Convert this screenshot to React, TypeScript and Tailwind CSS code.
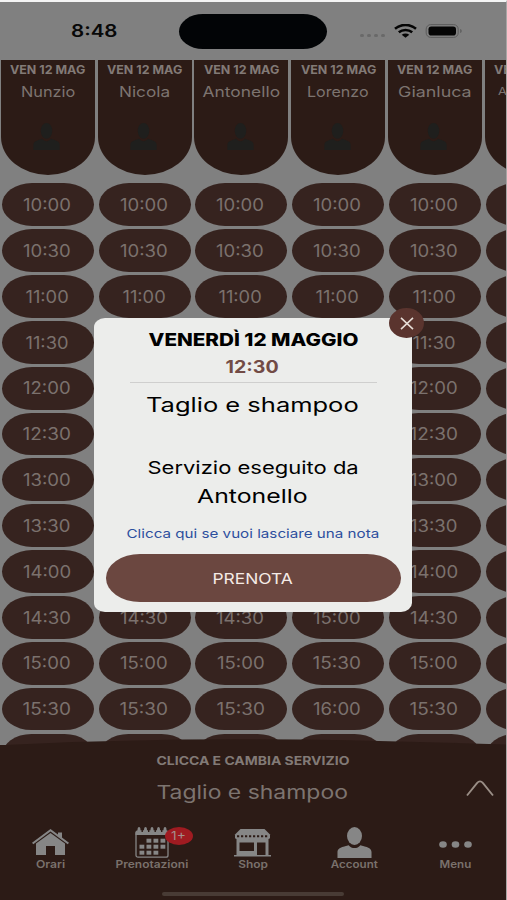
import { useLayoutEffect, useRef, useState, type ReactNode } from "react";

const TIMES = [
  "10:00", "10:30", "11:00", "11:30", "12:00", "12:30", "13:00",
  "13:30", "14:00", "14:30", "15:00", "15:30", "16:00",
];

// Lorenzo skips the 14:30 slot
const LORENZO_TIMES = [...TIMES.slice(0, 9), "15:00", "15:30", "16:00", "16:30"];

interface Barber {
  name: string;
  nameWidth: number;
  times: string[];
  small?: boolean;
}

const BARBERS: Barber[] = [
  { name: "Nunzio", nameWidth: 54, times: TIMES },
  { name: "Nicola", nameWidth: 51, times: TIMES },
  { name: "Antonello", nameWidth: 78, times: TIMES },
  { name: "Lorenzo", nameWidth: 62, times: LORENZO_TIMES },
  { name: "Gianluca", nameWidth: 74, times: TIMES },
  { name: "Alessandro", nameWidth: 68, times: TIMES, small: true },
];

/**
 * Single line of text stretched horizontally to a given width
 */
function WideText({
  width,
  className = "",
  children,
}: {
  width: number;
  className?: string;
  children: ReactNode;
}) {
  const ref = useRef<HTMLSpanElement>(null);
  const [scale, setScale] = useState(1);

  useLayoutEffect(() => {
    if (ref.current) setScale(width / ref.current.offsetWidth);
  }, [width]);

  return (
    <span
      ref={ref}
      className={`inline-block shrink-0 whitespace-nowrap ${className}`}
      style={{ transform: `scaleX(${scale})` }}
    >
      {children}
    </span>
  );
}

function StatusBar() {
  return (
    <div className="flex h-[58px] shrink-0 items-center bg-[#808080]">
      <div className="flex w-[179px] justify-center pt-[2px] pl-[10px]">
        <WideText width={47} className="text-[17px] font-semibold text-[#080808]">
          8:48
        </WideText>
      </div>
      <div className="h-[35px] w-[148px] rounded-[24px/17.5px] bg-[#020406]" />
      <div className="flex items-center pl-[33px]">
        <div className="flex gap-[3px] pt-2">
          {[0, 1, 2, 3].map((i) => (
            <div key={i} className="h-[3px] w-1 rounded-full bg-[#696969]" />
          ))}
        </div>
        <svg className="ml-[9px] h-[14px] w-[23px]" viewBox="0 0 23 14" preserveAspectRatio="none">
          <path
            d="M1 4.8C7 -.4 16 -.4 22 4.8M4.8 8.3c3.8-3.2 9.6-3.2 13.4 0"
            fill="none"
            stroke="#050505"
            strokeWidth="2.5"
          />
          <path d="M11.5 13.8L7.7 10.8c2.2-1.7 5.4-1.7 7.6 0z" fill="#050505" />
        </svg>
        <svg className="ml-[8px] h-[14px] w-[37px]" viewBox="0 0 37 14">
          <rect x="1.2" y=".6" width="32" height="12.8" rx="4.5" fill="none" stroke="#5c5c5c" />
          <rect x="3.5" y="2.5" width="27.5" height="9" rx="2.8" fill="#050505" />
          <path d="M35.2 5c2 .8 2 3.2 0 4z" fill="#5c5c5c" />
        </svg>
      </div>
    </div>
  );
}

function PersonIcon({ className }: { className: string }) {
  return (
    <svg className={className} viewBox="0 0 36 31" preserveAspectRatio="none" fill="currentColor">
      <ellipse cx="18" cy="9" rx="7.7" ry="9" />
      <path d="M.5 31v-6c0-3 3-4.3 6-5.2l5.500-1.600c3 3.800 9 3.800 12 0l5.500 1.600c3 .9 6 2.200 6 5.200v6z" />
    </svg>
  );
}

function BarberColumn({ barber }: { barber: Barber }) {
  return (
    <div className="flex w-[96.75px] shrink-0 flex-col items-center">
      <div className="flex h-[115px] w-[94px] flex-col items-center rounded-[0_0_47px_47px/0_0_38px_38px] bg-[#2c1b16]">
        <div className="flex h-[21px] items-center">
          <WideText width={75} className="text-[11.8px] font-bold text-[#827a76]">
            VEN 12 MAG
          </WideText>
        </div>
        <div className="flex h-[21px] items-center">
          <WideText
            width={barber.nameWidth}
            className={`${barber.small ? "text-[11px]" : "text-[14.5px]"} text-[#7d7470]`}
          >
            {barber.name}
          </WideText>
        </div>
        <PersonIcon className="mt-[21px] mr-[2px] h-[27px] w-[27px] text-[#1f1f1d]" />
      </div>
      <div className="mt-[8.4px] flex flex-col gap-[3.06px]">
        {barber.times.map((time) => (
          <div
            key={time}
            className="flex h-[42.8px] w-[92px] items-center justify-center rounded-[30px/21.4px] bg-[#36231f] pt-[2px] pr-[2px]"
          >
            <WideText width={time.startsWith("11") ? 43 : 48} className="text-[17px] text-[#7b716d]">
              {time}
            </WideText>
          </div>
        ))}
      </div>
    </div>
  );
}

function HomeIcon() {
  return (
    <svg className="h-[26px] w-[37px]" viewBox="0 0 37 26" fill="currentColor">
      <path d="M18.5 0L37 13.8l-1.3 1.4L18.5 2.6 1.3 15.2 0 13.8z" />
      <path d="M26 3.5h4v6.2l-4-3z" />
      <path d="M18.5 4L33 14.5V26H23v-9h-9v9H4V14.5z" />
    </svg>
  );
}

function CalendarIcon() {
  const cells = [
    [12, 12], [19, 12], [26, 12],
    [5, 18], [12, 18], [19, 18], [26, 18],
    [5, 24], [12, 24], [19, 24],
  ];
  return (
    <svg className="h-[31px] w-[34px]" viewBox="0 0 34 31" fill="currentColor">
      <rect x="1" y="4" width="32" height="26.2" rx="2" fill="none" stroke="currentColor" strokeWidth="1.3" />
      <path d="M.5 8V6c0-1 1-2 2-2h29c1 0 2 1 2 2v2z" />
      <path d="M7.2 0v5M13.7 0v5M20.2 0v5M26.7 0v5" stroke="#2c1b16" strokeWidth="1.4" />
      {[4, 10.5, 17, 23.5, 30].map((x) => (
        <ellipse key={x} cx={x} cy="3" rx="1.5" ry="3" />
      ))}
      {cells.map(([x, y]) => (
        <rect key={`${x}-${y}`} x={x - 0.5} y={y - 0.3} width="4.8" height="4" />
      ))}
    </svg>
  );
}

function ShopIcon() {
  return (
    <svg className="h-[28px] w-[37px]" viewBox="0 0 37 28" fill="currentColor">
      <path d="M6.5 0h24L36 5.5v3c0 1-1 1.500-2.500 1.500h-30C2 10 1 9.500 1 8.500v-3z" />
      <path d="M3 7.300h31" stroke="#2c1b16" strokeWidth="1.900" strokeDasharray="2.200 1.800" />
      <path d="M2.500 9.500h32V26H37v1.500H0V26h2.500zM5.500 13.500v8.500h14.500v-8.500zm17.500 0V26h8.500V13.500z" fillRule="evenodd" />
    </svg>
  );
}

function MenuIcon() {
  return (
    <svg className="mb-[10px] h-[7px] w-[33px]" viewBox="0 0 33 7" fill="currentColor">
      <ellipse cx="4" cy="3.5" rx="3.8" ry="3.2" />
      <ellipse cx="16.5" cy="3.5" rx="3.8" ry="3.2" />
      <ellipse cx="29" cy="3.5" rx="3.8" ry="3.2" />
    </svg>
  );
}

const NAV_ITEMS = [
  { label: "Orari", width: 29, icon: <HomeIcon />, pad: "pb-[3px]" },
  { label: "Prenotazioni", width: 73, icon: <CalendarIcon />, pad: "", badge: "1+" },
  { label: "Shop", width: 29.5, icon: <ShopIcon />, pad: "pb-[1px]" },
  { label: "Account", width: 47.5, icon: <PersonIcon className="h-[31px] w-[35px]" />, pad: "" },
  { label: "Menu", width: 32, icon: <MenuIcon />, pad: "" },
];

function BottomPanel() {
  return (
    <div className="absolute inset-x-0 bottom-0 flex h-[161px] flex-col">
      <svg className="-mb-px h-[7px] w-full shrink-0" viewBox="0 0 507 7" preserveAspectRatio="none">
        <path d="M0 6.2Q90 2 180 .6Q260-.6 350 1.3Q430 3 507 5.5V7H0z" fill="#2c1b16" />
      </svg>
      <div className="flex flex-1 flex-col bg-[#2c1b16]">
        <div className="flex h-[31px] items-center justify-center pr-px">
          <WideText width={193} className="text-[12px] font-bold text-[#827a76]">
            CLICCA E CAMBIA SERVIZIO
          </WideText>
        </div>
        <div className="grid h-[33px] grid-cols-[1fr_auto_1fr] items-center pr-[12px] pl-[10px]">
          <span />
          <WideText width={191} className="text-[18.5px] text-[#7d7470]">
            Taglio e shampoo
          </WideText>
          <svg className="h-[17px] w-[28px] -translate-y-[4px] justify-self-end" viewBox="0 0 28 17">
            <path
              d="M1 15.5L11 3.2q3-3.6 6 0L27 15.5"
              fill="none"
              stroke="#9a8e86"
              strokeWidth="1.9"
            />
          </svg>
        </div>
        <div className="mt-[17.5px] grid grid-cols-5">
          {NAV_ITEMS.map((item) => (
            <div key={item.label} className="flex flex-col items-center text-[#868686]">
              <div className={`relative flex h-[31px] items-end ${item.pad}`}>
                {item.icon}
                {item.badge && (
                  <div className="absolute top-0 left-[30px] flex h-[18px] w-[28px] items-center justify-center rounded-[14px/9px] bg-[#9f1b21]">
                    <WideText width={15} className="text-[12px] text-[#a3908c]">
                      {item.badge}
                    </WideText>
                  </div>
                )}
              </div>
              <WideText
                width={item.width}
                className="h-[14px] text-[10.5px] leading-[14px] font-semibold text-[#7a716c]"
              >
                {item.label}
              </WideText>
            </div>
          ))}
        </div>
        <div className="mx-auto mt-[20.5px] h-1 w-[182px] rounded-full bg-[#483b35]" />
      </div>
    </div>
  );
}

function BookingDialog() {
  return (
    <div className="absolute top-[318px] left-[94px] flex w-[318px] flex-col items-center rounded-[11px/9px] bg-[#ecedeb] px-[11.5px] pt-[9px] pb-[10px] text-black">
      <button className="absolute -top-[10px] -right-[12px] flex h-[30px] w-[35px] items-center justify-center rounded-[50%] bg-[#5a342e]">
        <svg className="h-[13px] w-[14px]" viewBox="0 0 14 13">
          <path d="M1 .8l12 11.4M13 .8L1 12.2" stroke="#e6dcd6" strokeWidth="1.6" />
        </svg>
      </button>
      <div className="flex h-7 items-center">
        <WideText width={210} className="text-[17px] font-extrabold">
          VENERDÌ 12 MAGGIO
        </WideText>
      </div>
      <div className="flex h-[26px] items-center pr-[2px]">
        <WideText width={53} className="text-[17px] font-bold text-[#724b45]">
          12:30
        </WideText>
      </div>
      <div className="mt-px h-px w-[247px] bg-[#cfcfce]" />
      <div className="flex h-[46px] items-center pr-[2px]">
        <WideText width={213} className="text-[19.5px]">
          Taglio e shampoo
        </WideText>
      </div>
      <div className="mt-[25px] flex h-[29px] items-center">
        <WideText width={211} className="text-[17.5px]">
          Servizio eseguito da
        </WideText>
      </div>
      <div className="flex h-7 items-center pr-[2px]">
        <WideText width={111} className="text-[19px]">
          Antonello
        </WideText>
      </div>
      <div className="mt-[14px] flex h-[17px] items-center">
        <WideText width={253} className="text-[12px] text-[#2c4f9e]">
          Clicca qui se vuoi lasciare una nota
        </WideText>
      </div>
      <button className="mt-3 flex h-12 w-full items-center justify-center rounded-[34px/24px] bg-[#6b4740] pt-[2px]">
        <WideText width={80} className="text-[15px] text-[#f5ebe6]">
          PRENOTA
        </WideText>
      </button>
    </div>
  );
}

export default function App() {
  return (
    <div className="relative flex h-[900px] w-[507px] flex-col overflow-hidden border-t-2 border-r border-t-[#f4f4f4] border-r-[#a8a6a5] bg-[#808080] font-['Inter',sans-serif]">
      <StatusBar />
      <div className="-ml-[0.5px] flex">
        {BARBERS.map((barber) => (
          <BarberColumn key={barber.name} barber={barber} />
        ))}
      </div>
      <BottomPanel />
      <div className="absolute inset-x-0 -top-[2px] h-0">
        <BookingDialog />
      </div>
    </div>
  );
}
